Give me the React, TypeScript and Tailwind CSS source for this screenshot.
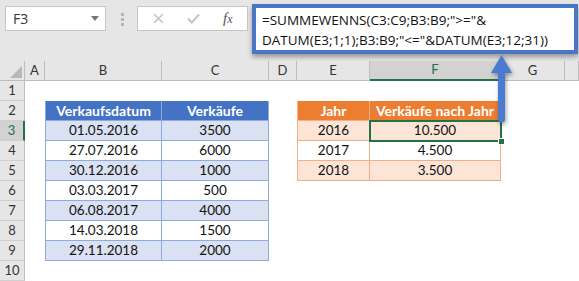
import React from "react";

const W = [25, 20, 117, 107, 28, 73, 131, 64, 14];
const LETTERS = ["A", "B", "C", "D", "E", "F", "G", ""];

const t1 = [
  ["01.05.2016", "3500"],
  ["27.07.2016", "6000"],
  ["30.12.2016", "1000"],
  ["03.03.2017", "500"],
  ["06.08.2017", "4000"],
  ["14.03.2018", "1500"],
  ["29.11.2018", "2000"],
];
const t2 = [
  ["2016", "10.500"],
  ["2017", "4.500"],
  ["2018", "3.500"],
];

function Blank({ w }: { w: number }) {
  return <div className="h-[20px] shrink-0" style={{ width: w }} />;
}

function Row({ r }: { r: number }) {
  const rowHdr =
    r === 3
      ? "bg-[#d2d2d2] text-[#217346] border-r-2 border-r-[#217346]"
      : "bg-[#e6e6e6] text-[#333] border-r border-r-[#bdbdbd]";
  let b: React.ReactNode = null;
  let c: React.ReactNode = null;
  if (r === 2) {
    b = (
      <div className="w-[117px] h-[20px] box-border bg-[#4472c4] border-l border-r border-b border-[#8ea9db] text-white font-bold text-[14px] flex items-center justify-center">
        Verkaufsdatum
      </div>
    );
    c = (
      <div className="w-[107px] h-[20px] box-border bg-[#4472c4] border-r border-b border-[#8ea9db] text-white font-bold text-[14px] flex items-center justify-center">
        Verkäufe
      </div>
    );
  } else if (r >= 3 && r <= 9) {
    const d = t1[r - 3];
    const odd = r % 2 === 1;
    b = (
      <div
        className={
          "w-[117px] h-[20px] box-border border-l border-r border-b border-[#8ea9db] flex items-center justify-center " +
          (odd ? "bg-[#d9e1f2]" : "bg-white")
        }
      >
        {d[0]}
      </div>
    );
    c = (
      <div
        className={
          "w-[107px] h-[20px] box-border border-r border-b border-[#8ea9db] flex items-center justify-center " +
          (odd ? "bg-[#d9e1f2]" : "bg-white")
        }
      >
        {d[1]}
      </div>
    );
  }
  let e: React.ReactNode = null;
  let f: React.ReactNode = null;
  if (r === 2) {
    e = (
      <div className="w-[73px] h-[20px] box-border bg-[#ed7d31] border-l border-r border-b border-[#f4b084] text-white font-bold text-[14px] flex items-center justify-center">
        Jahr
      </div>
    );
    f = (
      <div className="w-[131px] h-[20px] box-border bg-[#ed7d31] border-r border-b border-[#f4b084] text-white font-bold text-[14px] flex items-center justify-center">
        Verkäufe nach Jahr
      </div>
    );
  } else if (r >= 3 && r <= 5) {
    const d = t2[r - 3];
    const odd = r % 2 === 1;
    e = (
      <div
        className={
          "w-[73px] h-[20px] box-border border-l border-r border-b border-[#f4b084] flex items-center justify-center " +
          (odd ? "bg-[#fce4d6]" : "bg-white")
        }
      >
        {d[0]}
      </div>
    );
    f = (
      <div
        className={
          "w-[131px] h-[20px] box-border border-r border-b border-[#f4b084] flex items-center justify-center " +
          (odd ? "bg-[#fce4d6]" : "bg-white")
        }
      >
        {d[1]}
      </div>
    );
  }
  return (
    <div className="flex h-[20px] text-[13.5px] text-[#111]">
      <div
        className={
          "w-[25px] h-[20px] shrink-0 box-border border-b border-b-[#d0d0d0] flex items-center justify-center text-[13px] " +
          rowHdr
        }
      >
        {r}
      </div>
      <Blank w={W[1]} />
      {b ?? <Blank w={W[2]} />}
      {c ?? <Blank w={W[3]} />}
      <Blank w={W[4]} />
      {e ?? <Blank w={W[5]} />}
      {f ?? <Blank w={W[6]} />}
      <Blank w={W[7]} />
      <Blank w={W[8]} />
    </div>
  );
}

export default function App() {
  return (
    <div
      className="relative w-[579px] h-[281px] overflow-hidden bg-white"
      style={{ fontFamily: "Lato, 'Open Sans', sans-serif" }}
    >
      <div className="h-[61px] bg-[#e6e6e6] flex items-start">
        <div className="ml-[5px] mt-[6px] w-[101px] h-[25px] box-border bg-white border border-[#c6c6c6] flex items-center justify-between pl-[7px] pr-[6px]">
          <span
            className="text-[14px] text-[#333]"
            style={{ fontFamily: "'Open Sans', sans-serif" }}
          >
            F3
          </span>
          <svg width="8" height="5" viewBox="0 0 8 5">
            <path d="M0 0 H8 L4 5 Z" fill="#777" />
          </svg>
        </div>
        <div className="ml-[15px] mt-[13px] flex flex-col gap-[2px]">
          <div className="w-[3px] h-[3px] bg-[#b5b5b5]" />
          <div className="w-[3px] h-[3px] bg-[#b5b5b5]" />
          <div className="w-[3px] h-[3px] bg-[#b5b5b5]" />
        </div>
        <div className="ml-[13px] mt-[6px] w-[111px] h-[25px] box-border bg-white border border-[#c6c6c6] flex items-center">
          <svg className="ml-[15px]" width="11" height="11" viewBox="0 0 11 11">
            <path d="M1 1 L10 10 M10 1 L1 10" stroke="#c4c4c4" strokeWidth="1.6" />
          </svg>
          <svg className="ml-[23px]" width="13" height="11" viewBox="0 0 13 11">
            <path d="M1 5.5 L4.8 9.5 L12 1.5" stroke="#c4c4c4" strokeWidth="2" fill="none" />
          </svg>
          <span
            className="ml-[23px] italic text-[15px] text-[#555] leading-none"
            style={{ fontFamily: "'Liberation Serif', serif" }}
          >
            f<span className="text-[12px]">x</span>
          </span>
        </div>
        <div className="ml-[4px] mt-[4px] w-[326px] h-[50px] box-border border-4 border-[#4a76c6] bg-white pl-[6px] pt-[2px] shadow-[0_3px_5px_rgba(0,0,0,0.35)]">
          <div
            className="text-[13.5px] leading-[20px] text-[#111] whitespace-nowrap"
            style={{ fontFamily: "'Open Sans', sans-serif" }}
          >
            <div>=SUMMEWENNS(C3:C9;B3:B9;"&gt;="&amp;</div>
            <div>DATUM(E3;1;1);B3:B9;"&lt;="&amp;DATUM(E3;12;31))</div>
          </div>
        </div>
      </div>

      <div className="flex h-[20px] text-[13px] text-[#333]">
        <div className="relative w-[25px] h-[20px] shrink-0 box-border bg-[#e6e6e6] border-r border-b border-[#bdbdbd]">
          <svg className="absolute right-[2px] bottom-[2px]" width="12" height="12" viewBox="0 0 12 12">
            <path d="M12 0 V12 H0 Z" fill="#b8b8b8" />
          </svg>
        </div>
        {LETTERS.map((l, i) => (
          <div
            key={i}
            className={
              l === "F"
                ? "h-[20px] shrink-0 box-border bg-[#d2d2d2] text-[#217346] border-r border-r-[#bdbdbd] border-b-2 border-b-[#217346] flex items-center justify-center"
                : "h-[20px] shrink-0 box-border bg-[#e6e6e6] border-r border-b border-[#bdbdbd] flex items-center justify-center"
            }
            style={{ width: W[i + 1] }}
          >
            {l}
          </div>
        ))}
      </div>

      {Array.from({ length: 10 }, (_, i) => (
        <Row key={i} r={i + 1} />
      ))}

      <div className="absolute left-[369px] top-[120px] w-[133px] h-[22px] border-2 border-[#217346] pointer-events-none" />
      <div className="absolute left-[498px] top-[138px] w-[7px] h-[7px] bg-[#217346] border border-white" />

      <svg
        className="absolute left-[486px] top-[52px] drop-shadow-[1px_2px_2px_rgba(0,0,0,0.4)]"
        width="32"
        height="76"
        viewBox="0 0 32 76"
      >
        <path
          d="M15.5 3 L26 21 L19 21 L19 67 A3.5 3.5 0 0 1 12 67 L12 21 L5 21 Z"
          fill="#4a7bd0"
        />
      </svg>
    </div>
  );
}
